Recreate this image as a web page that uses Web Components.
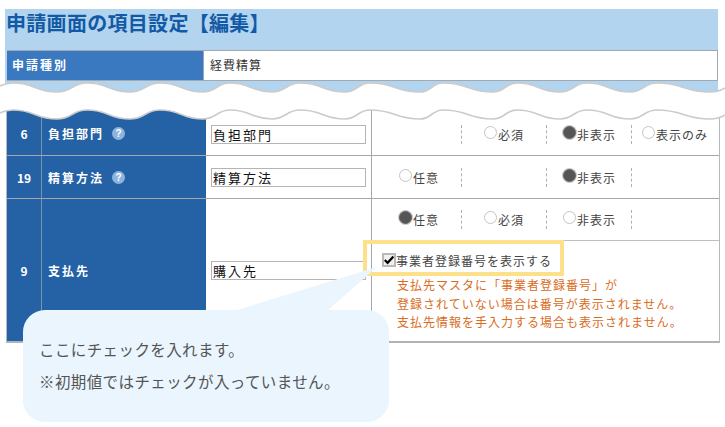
<!DOCTYPE html>
<html lang="ja">
<head>
<meta charset="utf-8">
<title>申請画面の項目設定</title>
<style>
    html, body {
        margin: 0;
        height: 427px;
        overflow: hidden;
        background: #fff;
        font-family: "Noto Sans CJK JP", "Noto Sans", sans-serif;
    }
</style>
</head>
<body>

<settings-page>
    <sheet-head title-text="申請画面の項目設定【編集】" label="申請種別" value="経費精算"></sheet-head>

    <item-table>
        <item-row num="6" label="負担部門" help style="--row-h: 48px; --row-pad: 5px; --label-pad: 3px">
            <text-box slot="input">負担部門</text-box>
            <option-group>
                <radio-opt></radio-opt>
                <radio-opt at="2">必須</radio-opt>
                <radio-opt at="3" checked>非表示</radio-opt>
                <radio-opt at="4">表示のみ</radio-opt>
            </option-group>
        </item-row>
        <item-row num="19" label="精算方法" help style="--row-h: 43px">
            <text-box slot="input">精算方法</text-box>
            <option-group>
                <radio-opt at="1">任意</radio-opt>
                <radio-opt></radio-opt>
                <radio-opt at="3" checked>非表示</radio-opt>
                <radio-opt></radio-opt>
            </option-group>
        </item-row>
        <item-row num="9" label="支払先" last style="--row-h: 142px">
            <text-box slot="input">購入先</text-box>
            <option-group divided style="--group-h: 42px">
                <radio-opt at="1" checked>任意</radio-opt>
                <radio-opt at="2">必須</radio-opt>
                <radio-opt at="3">非表示</radio-opt>
                <radio-opt></radio-opt>
            </option-group>
            <check-note label="事業者登録番号を表示する">
                支払先マスタに「事業者登録番号」が<br>
                登録されていない場合は番号が表示されません。<br>
                支払先情報を手入力する場合も表示されません。
            </check-note>
        </item-row>
    </item-table>

    <tear-line></tear-line>
    <focus-frame></focus-frame>
    <call-out>
        <p>ここにチェックを入れます。</p>
        <p>※初期値ではチェックが入っていません。</p>
    </call-out>
</settings-page>

<script>
class SettingsPage extends HTMLElement {

    constructor() {
        super()
        this.attachShadow({mode: "open"}).innerHTML = `
            <style>
                :host {
                    display: block;
                    position: relative;
                    width: 725px;
                    height: 427px;
                    padding-top: 9px;
                    box-sizing: border-box;
                }
            </style>
            <slot></slot>
        `
    }

}

class SheetHead extends HTMLElement {

    constructor() {
        super()
        this.shadow = this.attachShadow({mode: "open"})
    }

    connectedCallback() {
        this.shadow.innerHTML = `
            <style>
                :host {
                    display: block;
                    width: 713px;
                    height: 90px;
                    margin-left: 5px;
                    background: #b3d4ef;
                    box-sizing: border-box;
                    padding-left: 2px;
                }
                h1 {
                    margin: 0 0 0 -1px;
                    height: 41px;
                    font-size: 20px;
                    line-height: 28px;
                    font-weight: 700;
                    letter-spacing: 0.3px;
                    color: #125aa6;
                }
                .row {
                    display: flex;
                    height: 31px;
                    box-sizing: border-box;
                    border-top: 1px solid #a3a9ae;
                    border-bottom: 1px solid #a3a9ae;
                    border-right: 1px solid #a3a9ae;
                    background: #fff;
                }
                .label {
                    width: 197px;
                    box-sizing: border-box;
                    padding-left: 5px;
                    background: #3a78bf;
                    border-right: 1px solid #9aa5b0;
                    color: #fff;
                    font-size: 12px;
                    font-weight: 700;
                    letter-spacing: 2px;
                    line-height: 27px;
                }
                .value {
                    padding-left: 6px;
                    color: #333;
                    font-size: 12px;
                    letter-spacing: 1px;
                    line-height: 27px;
                }
            </style>
            <h1>${this.getAttribute("title-text")}</h1>
            <div class="row">
                <div class="label">${this.getAttribute("label")}</div>
                <div class="value">${this.getAttribute("value")}</div>
            </div>
        `
    }

}

class ItemTable extends HTMLElement {

    constructor() {
        super()
        this.attachShadow({mode: "open"}).innerHTML = `
            <style>
                :host {
                    display: block;
                    width: 712px;
                    margin: 9px 0 0 6px;
                    border-left: 1px solid #b5b9bd;
                    border-right: 1px solid #b5b9bd;
                    border-bottom: 2px solid #b0b4b8;
                }
            </style>
            <slot></slot>
        `
    }

}

class ItemRow extends HTMLElement {

    constructor() {
        super()
        this.shadow = this.attachShadow({mode: "open"})
    }

    connectedCallback() {
        let help = this.hasAttribute("help") ? `<help-mark></help-mark>` : ""
        this.shadow.innerHTML = `
            <style>
                :host {
                    display: grid;
                    grid-template-columns: 35px 164px 166px 1fr;
                    height: var(--row-h);
                    box-sizing: border-box;
                    border-bottom: 1px solid #a4a8ac;
                }
                :host([last]) {
                    border-bottom: 0;
                }
                .num, .label {
                    display: flex;
                    align-items: center;
                    box-sizing: border-box;
                    padding-top: var(--label-pad, 0);
                    background: #2461a5;
                    color: #fff;
                    font-size: 12px;
                    font-weight: 700;
                }
                .num {
                    justify-content: center;
                    border-right: 1px solid #7d92aa;
                }
                .label {
                    gap: 8px;
                    padding-left: 6px;
                    letter-spacing: 2px;
                }
                .input {
                    display: flex;
                    align-items: center;
                    box-sizing: border-box;
                    padding: var(--row-pad, 0) 5px 0 5px;
                    border-right: 1px solid #a4a8ac;
                }
                .options {
                    display: flex;
                    flex-direction: column;
                    justify-content: center;
                    padding-top: var(--row-pad, 0);
                }
                :host([last]) .options {
                    justify-content: flex-start;
                }
            </style>
            <div class="num">${this.getAttribute("num")}</div>
            <div class="label">${this.getAttribute("label")}${help}</div>
            <div class="input"><slot name="input"></slot></div>
            <div class="options"><slot></slot></div>
        `
    }

}

class HelpMark extends HTMLElement {

    constructor() {
        super()
        this.attachShadow({mode: "open"}).innerHTML = `
            <style>
                :host {
                    display: block;
                    width: 13px;
                    height: 13px;
                    border-radius: 50%;
                    background: #8db4de;
                    color: #fff;
                    font: 700 10px/13px "Liberation Sans", sans-serif;
                    letter-spacing: 0;
                    text-align: center;
                }
            </style>
            ?
        `
    }

}

class TextBox extends HTMLElement {

    constructor() {
        super()
        this.attachShadow({mode: "open"}).innerHTML = `
            <style>
                :host {
                    display: block;
                    width: 155px;
                    height: 19px;
                    box-sizing: border-box;
                    padding-left: 1px;
                    border: 1px solid #b4b4b4;
                    background: #fff;
                    color: #111;
                    font-size: 13px;
                    letter-spacing: 2px;
                    line-height: 17px;
                    white-space: nowrap;
                }
            </style>
            <slot></slot>
        `
    }

}

class OptionGroup extends HTMLElement {

    constructor() {
        super()
        this.attachShadow({mode: "open"}).innerHTML = `
            <style>
                :host {
                    display: grid;
                    grid-template-columns: 90px 85px 85px 86px;
                    align-items: center;
                    height: var(--group-h, auto);
                    box-sizing: border-box;
                }
                :host([divided]) {
                    border-bottom: 1px solid #bcc0c4;
                }
            </style>
            <slot></slot>
        `
    }

}

class RadioOpt extends HTMLElement {

    static get offsets() {
        return {1: 27, 2: 22, 3: 16, 4: 10}
    }

    constructor() {
        super()
        this.shadow = this.attachShadow({mode: "open"})
    }

    connectedCallback() {
        let at = this.getAttribute("at")
        let mark = ""
        if (at) {
            mark = `<span class="dot"></span>`
        }
        this.shadow.innerHTML = `
            <style>
                :host {
                    display: flex;
                    align-items: center;
                    height: 19px;
                    box-sizing: border-box;
                    padding-left: ${RadioOpt.offsets[at] || 0}px;
                    border-right: 1px dashed #b0b0b0;
                    color: #444;
                    font-size: 12px;
                    letter-spacing: 1px;
                    white-space: nowrap;
                }
                :host(:last-child) {
                    border-right: 0;
                }
                .dot {
                    flex: none;
                    width: 13px;
                    height: 13px;
                    margin: -4px 1px 0 0;
                    box-sizing: border-box;
                    border-radius: 50%;
                    border: 1px solid #c4c4c4;
                    background: #fff;
                }
                :host([checked]) .dot {
                    background: #555;
                    box-shadow: 0 0 0 1px #c8c8c8;
                    border-color: #666;
                }
            </style>
            ${mark}<slot></slot>
        `
    }

}

class CheckNote extends HTMLElement {

    constructor() {
        super()
        this.shadow = this.attachShadow({mode: "open"})
    }

    connectedCallback() {
        this.shadow.innerHTML = `
            <style>
                :host {
                    display: block;
                    padding: 11px 0 0 10px;
                }
                .check {
                    display: flex;
                    align-items: center;
                    height: 16px;
                    color: #444;
                    font-size: 12px;
                    letter-spacing: 1px;
                    white-space: nowrap;
                }
                .box {
                    flex: none;
                    width: 14px;
                    height: 14px;
                    box-sizing: border-box;
                    border: 2px solid #b9b9b9;
                    background: #f1f1f1;
                }
                svg {
                    display: block;
                }
                .note {
                    margin: 8px 0 0 15px;
                    color: #d96c1c;
                    font-size: 12px;
                    letter-spacing: 1px;
                    line-height: 18.5px;
                    white-space: nowrap;
                }
            </style>
            <div class="check">
                <span class="box">
                    <svg width="10" height="10" viewBox="0 0 10 10">
                        <path d="M0.8 5 L3.6 7.8 L9.4 1.6" fill="none" stroke="#000" stroke-width="2.2"/>
                    </svg>
                </span>
                ${this.getAttribute("label")}
            </div>
            <div class="note"><slot></slot></div>
        `
    }

}

class TearLine extends HTMLElement {

    constructor() {
        super()
        this.shadow = this.attachShadow({mode: "open"})
    }

    curve(points, shift) {
        let d = ""
        points.forEach((p, i) => {
            let y = p[1] + shift
            if (i === 0) {
                d += `M${p[0]} ${y}`
            } else {
                let prev = points[i - 1]
                let mid = (prev[0] + p[0]) / 2
                d += ` C${mid} ${prev[1] + shift} ${mid} ${y} ${p[0]} ${y}`
            }
        })
        return d
    }

    connectedCallback() {
        let xs = [-20, 13, 57, 87, 130, 160, 203, 230, 272, 300, 345, 370, 420, 443, 493, 517, 560, 587, 630, 657, 710, 742]
        let points = xs.map((x, i) => [x, i % 2 ? 83 : 92])
        let top = this.curve(points, 0)
        let bottom = this.curve(points, 27)
        let back = this.curve(points.slice().reverse(), 27).replace("M", "L")
        this.shadow.innerHTML = `
            <style>
                :host {
                    position: absolute;
                    left: 0;
                    top: 0;
                    width: 725px;
                    height: 130px;
                    pointer-events: none;
                }
            </style>
            <svg width="725" height="130" viewBox="0 0 725 130">
                <path d="${top} ${back} Z" fill="#fff"/>
                <path d="${top}" fill="none" stroke="#cbcbcb" stroke-width="1.6"/>
                <path d="${bottom}" fill="none" stroke="#cbcbcb" stroke-width="1.6"/>
            </svg>
        `
    }

}

class FocusFrame extends HTMLElement {

    constructor() {
        super()
        this.attachShadow({mode: "open"}).innerHTML = `
            <style>
                :host {
                    position: absolute;
                    left: 363px;
                    top: 240px;
                    width: 201px;
                    height: 36px;
                    box-sizing: border-box;
                    border: 4px solid #fde08a;
                    pointer-events: none;
                }
            </style>
        `
    }

}

class CallOut extends HTMLElement {

    constructor() {
        super()
        this.attachShadow({mode: "open"}).innerHTML = `
            <style>
                :host {
                    position: absolute;
                    left: 23px;
                    top: 310px;
                    width: 366px;
                    height: 112px;
                    box-sizing: border-box;
                    padding: 23px 0 0 16px;
                    border-radius: 22px;
                    background: #eaf5fe;
                    color: #555;
                    font-size: 15.5px;
                    letter-spacing: 0.4px;
                    line-height: 32px;
                }
                svg {
                    position: absolute;
                    left: 0;
                    top: -60px;
                    overflow: visible;
                }
                ::slotted(p) {
                    margin: 0;
                }
            </style>
            <svg width="366" height="60" viewBox="0 0 366 60">
                <polygon points="214,60 354,17 305,60" fill="#eaf5fe"/>
            </svg>
            <slot></slot>
        `
    }

}

window.customElements.define("settings-page", SettingsPage)
window.customElements.define("sheet-head", SheetHead)
window.customElements.define("item-table", ItemTable)
window.customElements.define("item-row", ItemRow)
window.customElements.define("help-mark", HelpMark)
window.customElements.define("text-box", TextBox)
window.customElements.define("option-group", OptionGroup)
window.customElements.define("radio-opt", RadioOpt)
window.customElements.define("check-note", CheckNote)
window.customElements.define("tear-line", TearLine)
window.customElements.define("focus-frame", FocusFrame)
window.customElements.define("call-out", CallOut)
</script>
</body>
</html>
